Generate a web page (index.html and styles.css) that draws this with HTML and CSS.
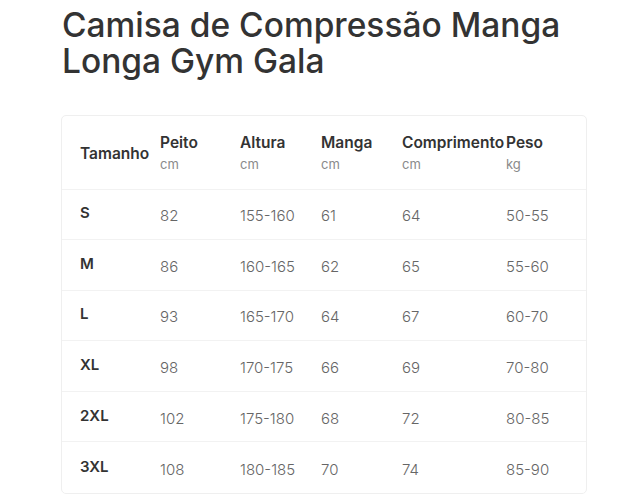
FILE: index.html
```html
<!DOCTYPE html>
<html lang="pt">
<head>
<meta charset="utf-8">
<link rel="stylesheet" href="styles.css">
</head>
<body>
<div class="page">
  <h1 class="title">Camisa de Compressão Manga Longa Gym Gala</h1>
  <div class="card">
    <table class="sizes">
      <colgroup>
        <col class="c-size"><col class="c-p"><col class="c-n"><col class="c-n"><col class="c-w"><col class="c-p">
      </colgroup>
      <thead>
        <tr>
          <th class="first">Tamanho</th>
          <th><span class="h">Peito</span><span class="u">cm</span></th>
          <th><span class="h">Altura</span><span class="u">cm</span></th>
          <th><span class="h">Manga</span><span class="u">cm</span></th>
          <th><span class="h">Comprimento</span><span class="u">cm</span></th>
          <th><span class="h">Peso</span><span class="u">kg</span></th>
        </tr>
      </thead>
      <tbody>
        <tr><td class="first">S</td><td>82</td><td>155-160</td><td>61</td><td>64</td><td>50-55</td></tr>
        <tr><td class="first">M</td><td>86</td><td>160-165</td><td>62</td><td>65</td><td>55-60</td></tr>
        <tr><td class="first">L</td><td>93</td><td>165-170</td><td>64</td><td>67</td><td>60-70</td></tr>
        <tr><td class="first">XL</td><td>98</td><td>170-175</td><td>66</td><td>69</td><td>70-80</td></tr>
        <tr><td class="first">2XL</td><td>102</td><td>175-180</td><td>68</td><td>72</td><td>80-85</td></tr>
        <tr><td class="first">3XL</td><td>108</td><td>180-185</td><td>70</td><td>74</td><td>85-90</td></tr>
      </tbody>
    </table>
  </div>
</div>
</body>
</html>
```
FILE: styles.css
```css
html, body {
  margin: 0;
  padding: 0;
  background: #ffffff;
}
body {
  font-family: "Inter", "Noto Sans", sans-serif;
  color: #333333;
}
.page {
  padding: 7px 53px 0 61px;
}
.title {
  margin: 0 0 0 1px;
  font-size: 33.5px;
  line-height: 36px;
  font-weight: 500;
  color: #333333;
  letter-spacing: 0;
}
.card {
  margin-top: 36px;
  border: 1px solid #efefef;
  border-radius: 5px;
  width: 524px;
  overflow: hidden;
}
.sizes {
  border-collapse: collapse;
  table-layout: fixed;
  width: 524px;
}
.c-size { width: 98px; }
.c-p { width: 80px; }
.c-n { width: 81px; }
.c-w { width: 104px; }
.sizes th, .sizes td {
  padding: 0;
  text-align: left;
  vertical-align: middle;
  white-space: nowrap;
}
.sizes thead tr {
  height: 73px;
  border-bottom: 1px solid #f2f2f2;
}
.sizes th {
  font-size: 15.5px;
  font-weight: 600;
  color: #333333;
  padding-top: 3px;
}
.sizes th .h {
  display: block;
  line-height: 20px;
}
.sizes th .u {
  display: block;
  font-size: 13px;
  font-weight: 400;
  color: #8a8a8a;
  line-height: 22px;
}
.sizes th.first {
  padding-top: 2px;
}
.sizes .first {
  padding-left: 18px;
}
.sizes tbody tr {
  height: 50.6px;
  border-bottom: 1px solid #f2f2f2;
}
.sizes tbody tr:last-child {
  border-bottom: none;
}
.sizes td {
  font-size: 15px;
  font-weight: 300;
  color: #666666;
  padding-top: 3px;
}
.sizes td.first {
  font-weight: 600;
  font-size: 15px;
  color: #333333;
  padding-top: 0;
  padding-bottom: 3px;
}
```
